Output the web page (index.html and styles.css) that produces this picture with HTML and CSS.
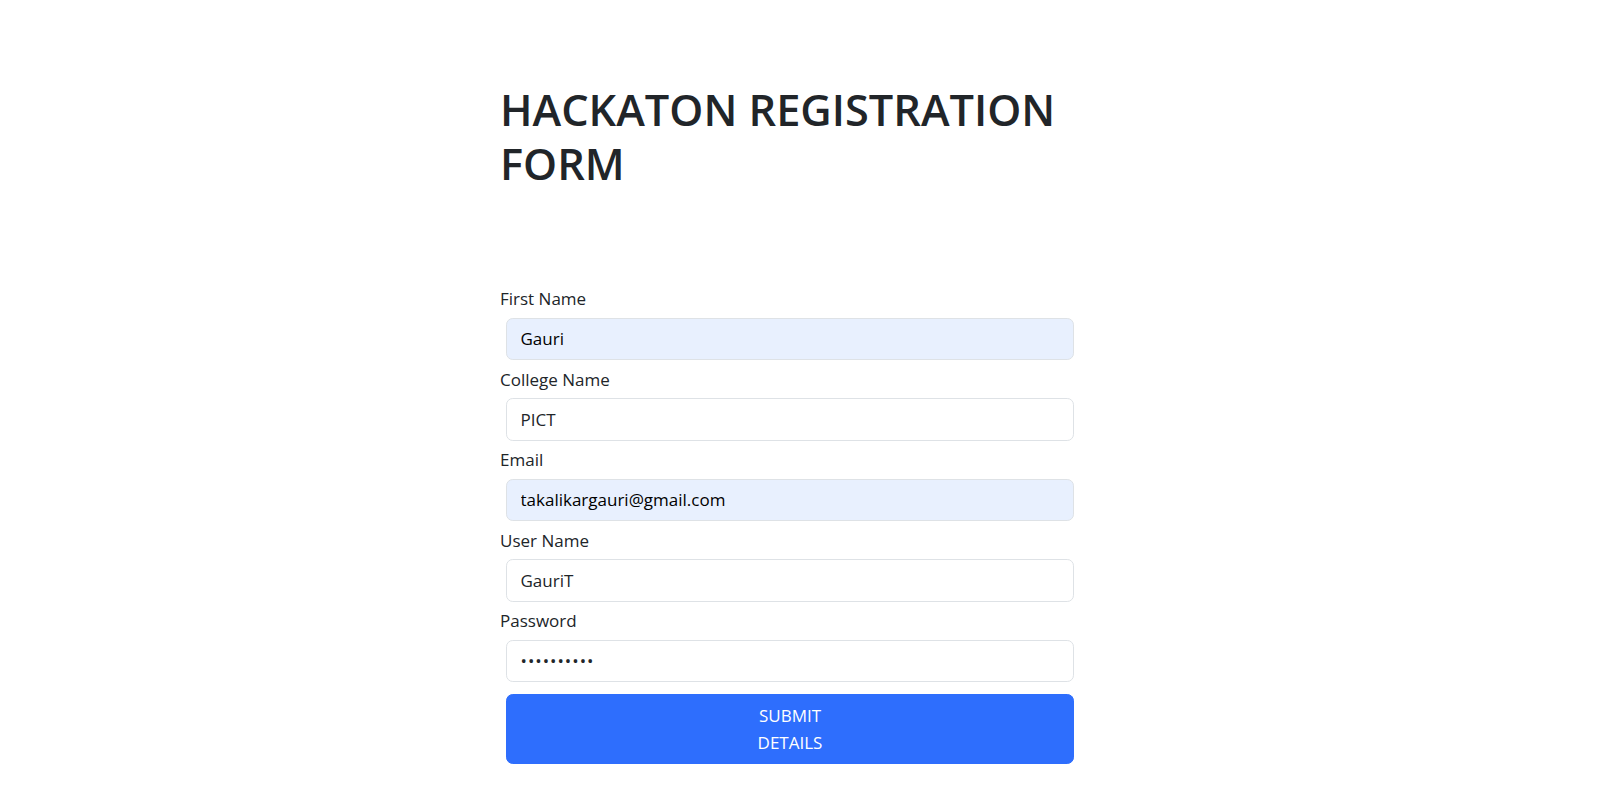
FILE: index.html
```html
<!DOCTYPE html>
<html lang="en">
<head>
<meta charset="utf-8">
<title>Hackaton Registration Form</title>
<link rel="stylesheet" href="styles.css">
</head>
<body>
<main class="container">
  <h1 class="title">HACKATON REGISTRATION FORM</h1>
  <form class="form">
    <label class="field-label" for="first-name">First Name</label>
    <input class="field field-autofill" id="first-name" type="text" value="Gauri">
    <label class="field-label" for="college">College Name</label>
    <input class="field" id="college" type="text" value="PICT">
    <label class="field-label" for="email">Email</label>
    <input class="field field-autofill" id="email" type="email" value="takalikargauri@gmail.com">
    <label class="field-label" for="username">User Name</label>
    <input class="field" id="username" type="text" value="GauriT">
    <label class="field-label" for="password">Password</label>
    <input class="field field-password" id="password" type="password" value="gauri12345">
    <button class="submit" type="button">SUBMIT<br>DETAILS</button>
  </form>
</main>
</body>
</html>
```
FILE: styles.css
```css
* {
  box-sizing: border-box;
}

html, body {
  margin: 0;
  padding: 0;
  background: #ffffff;
}

body {
  font-family: "Open Sans", "Noto Sans", sans-serif;
  font-size: 17px;
  line-height: 27px;
  color: #212529;
}

.container {
  width: 602px;
  margin: 0 auto;
}

.title {
  margin: 83px 0 94px;
  font-size: 43.3px;
  font-weight: 600;
  line-height: 54px;
  color: #212529;
}

.form {
  display: block;
}

.field-label {
  display: block;
  height: 27px;
  font-size: 17px;
  line-height: 27px;
  color: #212529;
}

.field {
  display: block;
  width: 568px;
  height: 42.5px;
  margin: 5.5px 0 5.5px 6px;
  padding: 6.75px 13.5px;
  font-family: "Open Sans", "Noto Sans", sans-serif;
  font-size: 17px;
  line-height: 27px;
  color: #212529;
  background: #ffffff;
  border: 1px solid #dee2e6;
  border-radius: 6.75px;
  outline: none;
}

.field-autofill {
  background: #e8f0fe;
  color: #000000;
}

.field-password {
  letter-spacing: 1px;
}

.submit {
  display: block;
  width: 568px;
  margin: 12px 0 0 6px;
  padding: 6.75px 13.5px;
  font-family: "Open Sans", "Noto Sans", sans-serif;
  font-size: 17px;
  line-height: 27px;
  color: #ffffff;
  text-align: center;
  background: #2e6efd;
  border: 1px solid #2e6efd;
  border-radius: 6.75px;
  cursor: pointer;
}
```
